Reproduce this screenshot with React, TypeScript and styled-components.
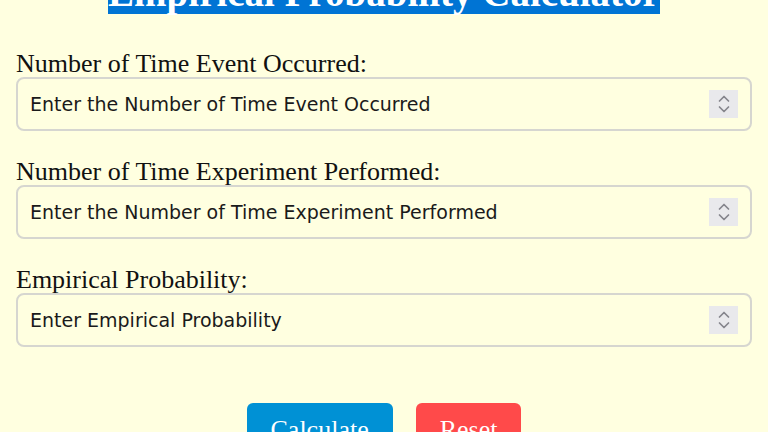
import React from 'react';
import styled, { createGlobalStyle } from 'styled-components';

const GlobalStyle = createGlobalStyle`
  html, body {
    margin: 0;
    padding: 0;
    background: #ffffe0;
    overflow: hidden;
  }
`;

const Page = styled.div`
  padding: 0 16px;
  font-family: "Liberation Serif", "Times New Roman", serif;
  color: #111;
`;

const Title = styled.h1`
  margin: -29px 0 37px;
  text-align: center;
  font-size: 39px;
  line-height: 43px;
  font-weight: bold;

  span {
    background: #0074d4;
    color: #fff;
  }
`;

const Fields = styled.div`
  display: flex;
  flex-direction: column;
  gap: 28px;
`;

const Field = styled.div`
  display: flex;
  flex-direction: column;
`;

const Label = styled.label`
  font-size: 26px;
  line-height: 26px;
`;

const InputWrap = styled.div`
  position: relative;
`;

const Input = styled.input`
  box-sizing: border-box;
  width: 100%;
  height: 54px;
  margin: 0;
  padding: 0 12px;
  border: 2px solid #d6d6d0;
  border-radius: 8px;
  background: #ffffe0;
  font-family: "DejaVu Sans", Verdana, sans-serif;
  font-size: 19px;
  color: #111;
  outline: none;
  -moz-appearance: textfield;

  &::-webkit-inner-spin-button,
  &::-webkit-outer-spin-button {
    -webkit-appearance: none;
    margin: 0;
  }

  &::placeholder {
    color: #1a1a1a;
    opacity: 1;
  }
`;

const Spinner = styled.div`
  position: absolute;
  top: 50%;
  right: 14px;
  transform: translateY(-50%);
  width: 29px;
  height: 28px;
  background: #e9e9ec;
  display: flex;
  align-items: center;
  justify-content: center;
  pointer-events: none;
`;

const Actions = styled.div`
  display: flex;
  justify-content: center;
  gap: 23px;
  margin-top: 56px;
`;

const Button = styled.button<{ $tone: 'blue' | 'red' }>`
  border: none;
  border-radius: 6px;
  padding: 12px 24px;
  background: ${(p) => (p.$tone === 'blue' ? '#0091d5' : '#ff4a4a')};
  color: #fff;
  font-family: "Liberation Serif", "Times New Roman", serif;
  font-size: 26px;
  cursor: pointer;
`;

const SpinIcon = () => (
  <svg width="16" height="24" viewBox="0 0 16 24" fill="none" stroke="#85858c" strokeWidth="1.7" strokeLinecap="round" strokeLinejoin="round">
    <path d="M3.5 9 L8 4.5 L12.5 9" />
    <path d="M3.5 15 L8 19.5 L12.5 15" />
  </svg>
);

const fields = [
  { id: 'occurred', label: 'Number of Time Event Occurred:', placeholder: 'Enter the Number of Time Event Occurred' },
  { id: 'performed', label: 'Number of Time Experiment Performed:', placeholder: 'Enter the Number of Time Experiment Performed' },
  { id: 'probability', label: 'Empirical Probability:', placeholder: 'Enter Empirical Probability' },
];

export default function App() {
  return (
    <>
      <GlobalStyle />
      <Page>
        <Title>
          <span>Empirical Probability Calculator</span>
        </Title>
        <Fields>
          {fields.map((f) => (
            <Field key={f.id}>
              <Label htmlFor={f.id}>{f.label}</Label>
              <InputWrap>
                <Input id={f.id} type="number" placeholder={f.placeholder} />
                <Spinner>
                  <SpinIcon />
                </Spinner>
              </InputWrap>
            </Field>
          ))}
        </Fields>
        <Actions>
          <Button $tone="blue">Calculate</Button>
          <Button $tone="red">Reset</Button>
        </Actions>
      </Page>
    </>
  );
}
